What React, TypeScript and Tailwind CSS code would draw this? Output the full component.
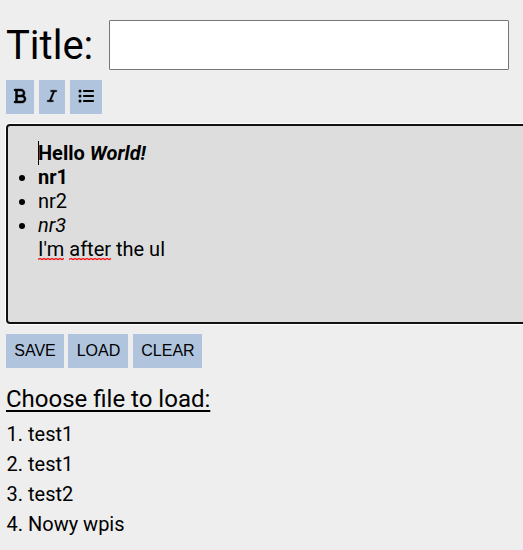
import { FaBold, FaItalic, FaListUl } from "react-icons/fa6";

const files = ["test1", "test1", "test2", "Nowy wpis"];

function Misspelled({ children, width }: { children: string; width: number }) {
  const points = Array.from({ length: Math.floor(width / 2) + 1 }, (_, i) => `${i * 2},${i % 2 ? 0.5 : 1.5}`).join(" ");
  return (
    <span className="relative inline-block">
      {children}
      <svg className="absolute left-0 top-[21px] h-[3px]" width={width} height={3} aria-hidden="true">
        <polyline points={points} fill="none" stroke="#f00" strokeWidth="1.2" />
      </svg>
    </span>
  );
}

export default function App() {
  return (
    <div className="h-[550px] w-[523px] overflow-hidden bg-[#eee] pl-1.5 pt-5 font-['Roboto',sans-serif] text-black">
      <div className="flex h-[50px] items-center">
        <label htmlFor="title" className="w-[103px] shrink-0 pt-0.5 text-[40px] leading-[50px]">
          Title:
        </label>
        <input id="title" className="h-[50px] w-[400px] rounded-[1px] border border-[#767676] bg-white px-2 text-2xl" />
      </div>

      <div className="mt-2.5 flex h-[34px]">
        <button className="flex w-7 items-center justify-center bg-[#b0c4de] pb-0.5">
          <FaBold className="h-4 w-3 overflow-visible" stroke="currentColor" strokeWidth={14} />
        </button>
        <button className="ml-[5px] flex w-[26px] items-center justify-center bg-[#b0c4de] pb-0.5">
          <FaItalic className="h-4 w-2.5 overflow-visible" stroke="currentColor" strokeWidth={12} />
        </button>
        <button className="ml-[5px] flex w-8 items-center justify-center bg-[#b0c4de] pb-0.5">
          <FaListUl className="h-4 w-4" />
        </button>
      </div>

      <div className="mt-2.5 h-[200px] w-[600px] rounded-[4px] border-2 border-[#101010] bg-[#ddd] pl-[30px] pt-[15px] text-xl leading-6 shadow-[0_0_0_1px_#fff]">
        <p className="font-bold">
          <span className="-mr-px inline-block h-6 w-px bg-black align-top" />
          Hello <i>World!</i>
        </p>
        <ul className="list-disc">
          <li className="font-bold">nr1</li>
          <li>nr2</li>
          <li className="italic">nr3</li>
        </ul>
        <p>
          <Misspelled width={26}>I'm</Misspelled> <Misspelled width={42}>after</Misspelled> the ul
        </p>
      </div>

      <div className="mt-2.5 flex h-[34px] font-['Liberation_Sans',Arial,sans-serif] text-base">
        <button className="w-[58px] bg-[#b0c4de]">SAVE</button>
        <button className="ml-1 w-[60px] bg-[#b0c4de] pl-px">LOAD</button>
        <button className="ml-[5px] w-[69px] bg-[#b0c4de] pl-px">CLEAR</button>
      </div>

      <h2 className="mt-4 text-2xl leading-[30px] underline decoration-2 underline-offset-[3px] [text-decoration-skip-ink:none]">
        Choose file to load:
      </h2>
      <ol className="mt-[5px] pl-[0.5px] text-xl leading-[30px]">
        {files.map((file, index) => (
          <li key={index}>
            {index + 1}. {file}
          </li>
        ))}
      </ol>
    </div>
  );
}
